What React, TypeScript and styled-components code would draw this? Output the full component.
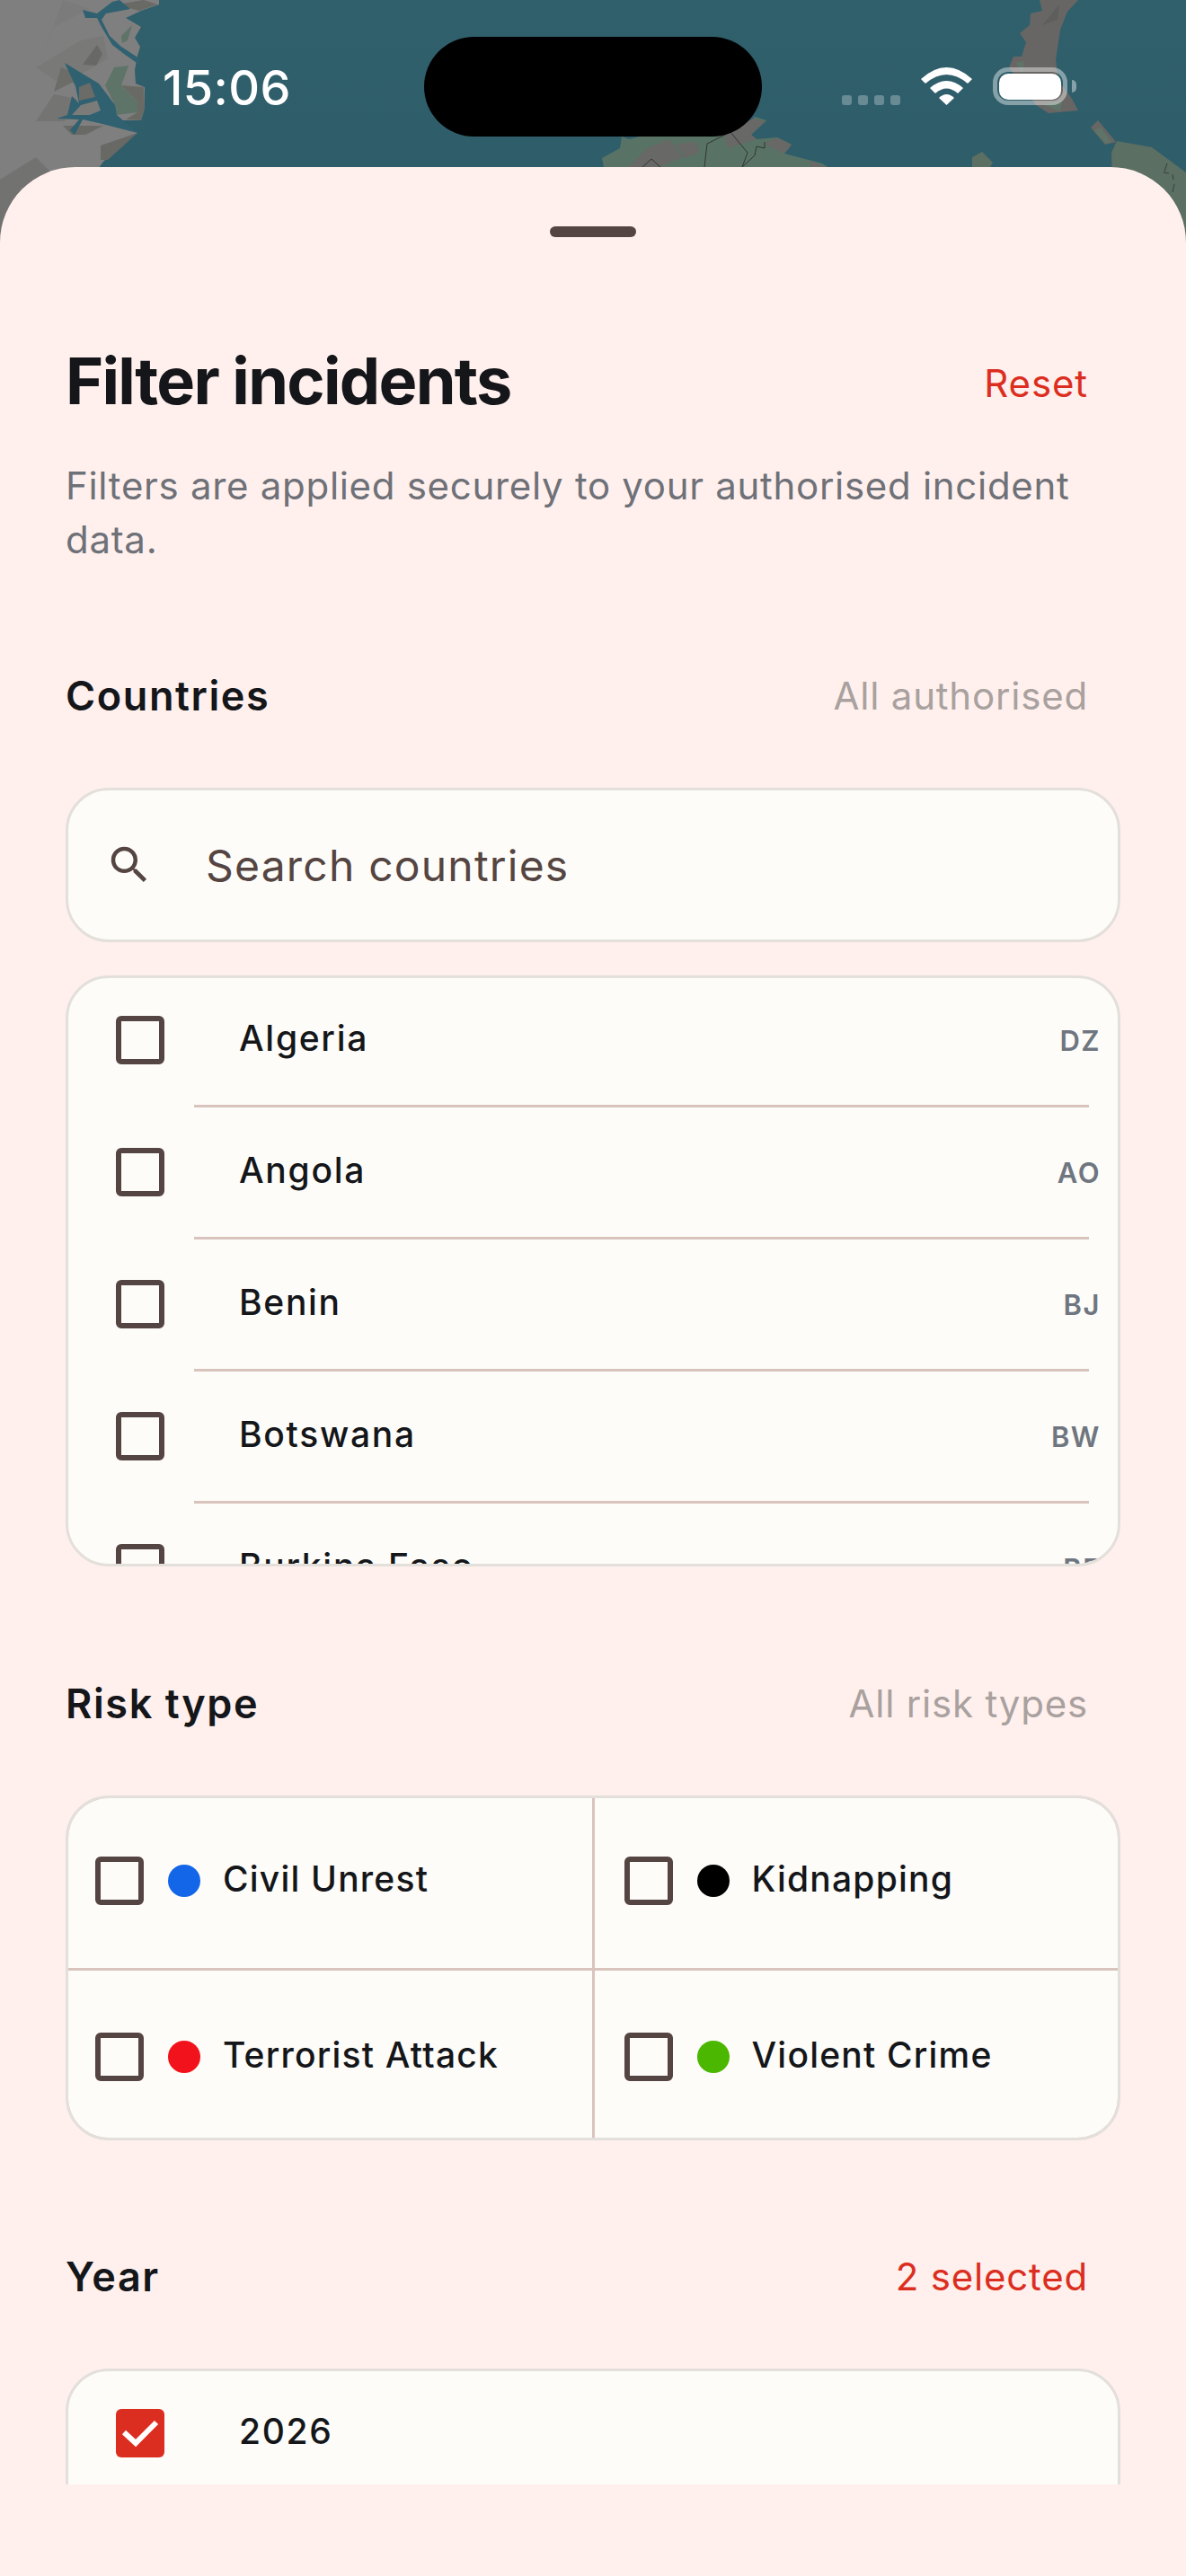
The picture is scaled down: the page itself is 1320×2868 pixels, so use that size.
import React from 'react'
import styled, { createGlobalStyle } from 'styled-components'
import { MdSearch } from 'react-icons/md'

const GlobalStyle = createGlobalStyle`
  html, body {
    margin: 0;
    padding: 0;
    background: #fff0ed;
  }
  * {
    box-sizing: border-box;
  }
`

const Screen = styled.div`
  position: relative;
  width: 1320px;
  height: 2868px;
  overflow: hidden;
  font-family: Inter, 'Liberation Sans', sans-serif;
  color: #14161a;
  background: #fff0ed;
`

const MapLayer = styled.svg`
  position: absolute;
  left: 0;
  top: 0;
`

const StatusBar = styled.div`
  position: relative;
  display: flex;
  align-items: flex-start;
  height: 186px;
  padding: 41px 0 0 181px;
`

const Clock = styled.div`
  width: 291px;
  margin-top: 25px;
  font-size: 54px;
  line-height: 64px;
  font-weight: 500;
  letter-spacing: 0.4px;
  color: #fff;
`

const Island = styled.div`
  width: 376px;
  height: 111px;
  border-radius: 56px;
  background: #000;
`

const StatusIcons = styled.div`
  display: flex;
  align-items: flex-end;
  height: 42px;
  margin: 34px 0 0 89px;
`

const SignalDots = styled.div`
  display: flex;
  gap: 7px;
  margin: 0 23px 0 0;
`

const SignalDot = styled.span`
  width: 11px;
  height: 11px;
  border-radius: 3px;
  background: rgba(255, 255, 255, 0.28);
`

const Battery = styled.div`
  display: flex;
  align-items: center;
  width: 83px;
  height: 42px;
  margin-left: 23px;
  padding: 2px;
  border: 5px solid rgba(255, 255, 255, 0.42);
  border-radius: 17px;
`

const BatteryFill = styled.div`
  width: 71px;
  height: 29px;
  border-radius: 10px;
  background: #fff;
`

const BatteryCap = styled.div`
  width: 5px;
  height: 14px;
  margin: 0 0 14px 5px;
  border-radius: 0 5px 5px 0;
  background: rgba(255, 255, 255, 0.42);
`

const Sheet = styled.div`
  position: relative;
  height: 2682px;
  padding-top: 66px;
  border-radius: 84px 84px 0 0;
  background: #fff0ed;
`

const Handle = styled.div`
  width: 96px;
  height: 12px;
  margin: 0 auto;
  border-radius: 6px;
  background: #554542;
`

const ScrollArea = styled.div`
  height: 2502px;
  padding: 0 73px;
  overflow: hidden;
`

const TitleRow = styled.div`
  display: flex;
  align-items: center;
  justify-content: space-between;
  height: 84px;
  margin-top: 118px;
  padding-right: 36px;
`

const Title = styled.h1`
  margin: 0;
  font-size: 72px;
  line-height: 84px;
  font-weight: 700;
  letter-spacing: -1.7px;
`

const ResetLink = styled.span`
  margin-top: 4px;
  font-size: 42px;
  font-weight: 400;
  letter-spacing: 0.9px;
  color: #dc2e20;
`

const Description = styled.p`
  width: 1150px;
  margin: 45px 0 0;
  font-size: 42px;
  line-height: 60px;
  letter-spacing: 0.7px;
  color: #6f7178;
`

const SectionHeader = styled.div<{ $gap: number }>`
  display: flex;
  align-items: center;
  justify-content: space-between;
  height: 60px;
  margin: ${(p) => p.$gap}px 0 72px;
  padding-right: 36px;
`

const SectionTitle = styled.h2`
  margin: 0;
  font-size: 45px;
  line-height: 60px;
  font-weight: 600;
  letter-spacing: 1.6px;
`

const SectionHint = styled.span<{ $active?: boolean }>`
  margin-bottom: 2px;
  font-size: 42px;
  letter-spacing: 0.8px;
  color: ${(p) => (p.$active ? '#dc2e20' : '#a9a19f')};
`

const Card = styled.div`
  border: 3px solid #e3dfda;
  border-radius: 48px;
  background: #fdfcf8;
  overflow: hidden;
`

const SearchCard = styled(Card)`
  display: flex;
  align-items: center;
  gap: 58px;
  height: 172px;
  margin-bottom: 37px;
  padding-left: 41px;
  color: #554542;
`

const SearchHint = styled.span`
  font-size: 48px;
  letter-spacing: 1.2px;
  color: #554542;
`

const ListCard = styled(Card)<{ $height: number }>`
  height: ${(p) => p.$height}px;
`

const Row = styled.div`
  display: flex;
  align-items: center;
  height: 141px;
  padding: 0 19px 3px 53px;
`

const RowName = styled.span`
  flex: 1;
  margin: 0 0 5px 83px;
  font-size: 39px;
  font-weight: 500;
  letter-spacing: 1.7px;
`

const RowCode = styled.span`
  font-size: 31px;
  font-weight: 600;
  letter-spacing: 1.5px;
  color: #6f7680;
`

const RowDivider = styled.div`
  height: 3px;
  margin: 0 32px 3px 140px;
  background: #d9c3bd;
`

const Box = styled.span<{ $checked?: boolean }>`
  display: flex;
  flex: none;
  align-items: center;
  justify-content: center;
  width: 54px;
  height: 54px;
  border: ${(p) => (p.$checked ? 'none' : '6px solid #554542')};
  border-radius: 6px;
  background: ${(p) => (p.$checked ? '#dc2e20' : 'transparent')};
`

const RiskGrid = styled(Card)`
  display: grid;
  grid-template-columns: 1fr 1fr;
  grid-template-rows: 189px 186px;
  gap: 3px;
  height: 384px;
  background: #d9c3bd;
`

const RiskCell = styled.div<{ $lower?: boolean }>`
  display: flex;
  align-items: center;
  padding: ${(p) => (p.$lower ? '5px' : '0')} 0 ${(p) => (p.$lower ? '0' : '5px')} 30px;
  background: #fdfcf8;

  &:nth-child(even) {
    padding-left: 33px;
  }
`

const RiskDot = styled.span<{ $color: string }>`
  flex: none;
  width: 36px;
  height: 36px;
  margin: 0 25px 0 27px;
  border-radius: 50%;
  background: ${(p) => p.$color};
`

const RiskName = styled.span`
  margin-bottom: 5px;
  font-size: 39px;
  font-weight: 500;
  letter-spacing: 1.2px;
`

const WifiIcon = () => (
  <svg width="57" height="42" viewBox="0 0 57 42" fill="#fff">
    <path d="M0 13 Q28.5 -13 57 13 L52 18 Q28.5 -2 5 18 Z" />
    <path d="M10 23 Q28.5 7 47 23 L41 29 Q28.5 18 16 29 Z" />
    <path d="M20 34 Q28.5 26 37 34 L28.5 42 Z" />
  </svg>
)

const CheckMark = () => (
  <svg width="54" height="54" viewBox="0 0 54 54" fill="none">
    <path d="M9 26 L22 38 L45 15" stroke="#fff" strokeWidth="6" />
  </svg>
)

const MapBackdrop = () => (
  <MapLayer width="1320" height="290" viewBox="0 0 1320 290">
    <defs>
      <linearGradient id="sea" x1="0" y1="0" x2="0" y2="1">
        <stop offset="0" stopColor="#30606c" />
        <stop offset="1" stopColor="#2e5c69" />
      </linearGradient>
    </defs>
    <rect width="1320" height="290" fill="url(#sea)" />

    {/* west coast */}
    <path fill="#7f7f7f" d="M0 0 H177 V5 L157 12 L140 20 L157 30 L150 42 L156 52 L153 62 L150 78 L151 93 L161 97 V120 L157 134 L130 134 L153 148 L130 165 L115 180 L100 200 L60 260 L0 290 Z" />
    <path fill="#757574" d="M70 0 L100 10 L60 30 L45 70 Z" opacity="0.3" />
    <path fill="#747472" d="M90 45 L115 40 L120 65 L95 80 L62 90 L40 75 Z" opacity="0.55" />
    <path fill="#686866" d="M108 50 L114 60 L107 73 L92 72 Z" />
    <path fill="#6c6c69" d="M68 75 L90 85 L105 95 L80 92 L60 102 Z" />
    <path fill="#6d6d6a" d="M60 105 L85 110 L72 135 L40 135 Z" opacity="0.6" />
    <path fill="#696966" d="M70 140 L115 140 L95 150 L80 150 Z" />
    <path fill="#686865" d="M112 162 L153 148 L120 178 L112 178 Z" />
    <path fill="#727271" d="M0 200 L40 175 L55 190 L20 250 L0 260 Z" />
    <path fill="#696966" d="M130 5 L160 0 L175 5 L155 12 Z" />
    <path fill="#5f7468" d="M117 95 L127 75 L143 73 L135 95 L153 113 L153 125 L130 128 L127 115 Z" />
    <path fill="#6a6a65" d="M135 95 L160 97 L161 120 L157 134 L140 133 L153 125 L153 113 Z" />
    <path fill="#5f7468" d="M135 40 L147 28 L142 45 L136 48 Z" />

    {/* inlets */}
    <path fill="#2f6170" d="M92 11 L108 15 L125 2 L133 0 L145 10 L118 15 L113 22 L122 40 L135 52 L155 65 L155 72 L138 60 L125 50 L113 30 L108 20 L95 20 Z" />
    <path fill="#2f6170" d="M72 70 L100 87 L110 93 L128 117 L130 128 L153 148 L110 137 L92 133 L83 150 L78 145 L88 133 L63 132 L75 128 L80 107 L88 115 L84 96 Z" />
    <path fill="#7b7b7a" d="M80 128 L90 117 L108 112 L112 123 L100 128 Z" />
    <path fill="#6b6b68" d="M88 97 L100 92 L106 108 L88 112 Z" />

    {/* middle land */}
    <path fill="#587365" d="M672 186 L670 176 L690 165 L692 152 L700 155 L712 152 L790 152 L825 145 L840 130 L853 134 L836 150 L842 155 L865 153 L881 161 L873 171 L915 182 L928 190 H672 Z" />
    <path fill="#686866" d="M700 186 L720 165 L745 155 L760 175 L735 186 Z" />
    <path fill="#686866" d="M752 160 L775 158 L778 170 L762 176 Z" />
    <path fill="#686866" d="M806 150 L838 132 L852 135 L836 150 L842 155 L810 165 Z" />
    <path fill="#686866" d="M865 153 L881 161 L873 171 L850 160 Z" />
    <path fill="#686866" d="M900 178 L928 190 H905 Z" />
    <path fill="none" stroke="#333" strokeWidth="1" d="M813 147 L787 160 L784 186 M813 147 L832 170 L826 186 L840 173 L842 163 L851 165 L851 158 M715 186 L725 177 L735 186" />

    {/* east coast */}
    <path fill="#686664" d="M1157 0 H1200 L1188 13 L1180 33 L1175 67 L1178 90 L1193 110 L1200 123 L1167 126 L1153 117 L1123 75 L1128 63 L1137 63 L1142 47 L1135 37 L1146 28 L1147 15 L1160 12 Z" />
    <path fill="#5f7468" d="M1131 70 L1140 68 L1138 82 Z" />
    <path fill="#5f7468" d="M1160 116 L1182 112 L1180 124 Z" />
    <path fill="#5e5e5d" d="M1160 28 L1179 5 L1177 22 Z" />
    <path fill="#686664" d="M1214 142 L1222 134 L1242 158 L1230 161 Z" />
    <path fill="#5f7468" d="M1218 145 L1225 142 L1237 158 L1230 160 Z" />
    <path fill="#5b6f63" d="M1237 170 L1243 157 L1282 164 L1320 192 V290 H1240 Z" />
    <path fill="#5b6f63" d="M1082 175 L1093 169 L1105 181 L1100 190 H1082 Z" />
    <path fill="none" stroke="#3a3f3c" strokeWidth="1" d="M1299 182 L1296 191 M1295 192 L1301 193 M1305 194 L1306 200 M1307 205 L1305 214" />
  </MapLayer>
)

const countries = [
  { name: 'Algeria', code: 'DZ' },
  { name: 'Angola', code: 'AO' },
  { name: 'Benin', code: 'BJ' },
  { name: 'Botswana', code: 'BW' },
  { name: 'Burkina Faso', code: 'BF' },
]

const risks = [
  { name: 'Civil Unrest', color: '#1366e8' },
  { name: 'Kidnapping', color: '#000000' },
  { name: 'Terrorist Attack', color: '#f2121c' },
  { name: 'Violent Crime', color: '#4bb700' },
]

const App = () => {
  return (
    <Screen>
      <GlobalStyle />
      <MapBackdrop />
      <StatusBar>
        <Clock>15:06</Clock>
        <Island />
        <StatusIcons>
          <SignalDots>
            <SignalDot />
            <SignalDot />
            <SignalDot />
            <SignalDot />
          </SignalDots>
          <WifiIcon />
          <Battery>
            <BatteryFill />
          </Battery>
          <BatteryCap />
        </StatusIcons>
      </StatusBar>

      <Sheet>
        <Handle />
        <ScrollArea>
          <TitleRow>
            <Title>Filter incidents</Title>
            <ResetLink>Reset</ResetLink>
          </TitleRow>
          <Description>Filters are applied securely to your authorised incident data.</Description>

          <SectionHeader $gap={114}>
            <SectionTitle>Countries</SectionTitle>
            <SectionHint>All authorised</SectionHint>
          </SectionHeader>
          <SearchCard>
            <MdSearch size={54} />
            <SearchHint>Search countries</SearchHint>
          </SearchCard>
          <ListCard $height={658}>
            {countries.map((country, i) => (
              <React.Fragment key={country.code}>
                <Row>
                  <Box />
                  <RowName>{country.name}</RowName>
                  <RowCode>{country.code}</RowCode>
                </Row>
                {i < countries.length - 1 && <RowDivider />}
              </React.Fragment>
            ))}
          </ListCard>

          <SectionHeader $gap={123}>
            <SectionTitle>Risk type</SectionTitle>
            <SectionHint>All risk types</SectionHint>
          </SectionHeader>
          <RiskGrid>
            {risks.map((risk, i) => (
              <RiskCell key={risk.name} $lower={i > 1}>
                <Box />
                <RiskDot $color={risk.color} />
                <RiskName>{risk.name}</RiskName>
              </RiskCell>
            ))}
          </RiskGrid>

          <SectionHeader $gap={122}>
            <SectionTitle>Year</SectionTitle>
            <SectionHint $active>2 selected</SectionHint>
          </SectionHeader>
          <ListCard $height={300}>
            <Row>
              <Box $checked>
                <CheckMark />
              </Box>
              <RowName>2026</RowName>
            </Row>
          </ListCard>
        </ScrollArea>
      </Sheet>
    </Screen>
  )
}

export default App
